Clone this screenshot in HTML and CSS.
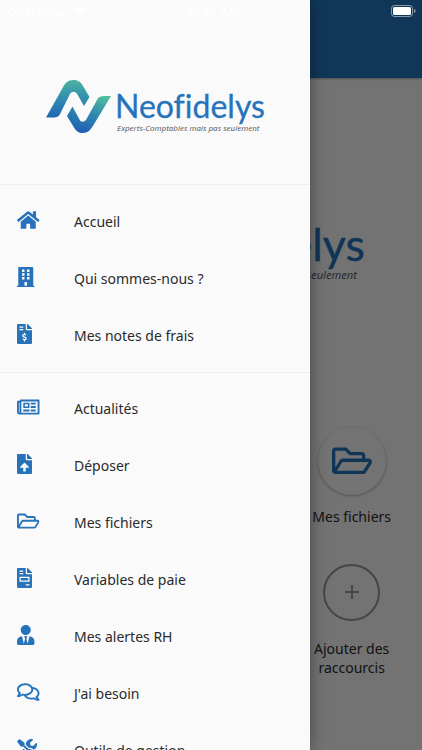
FILE: index.html
```html
<!DOCTYPE html>
<html lang="fr">
<head>
<meta charset="utf-8">
<meta name="viewport" content="width=device-width, initial-scale=1">
<title>Neofidelys</title>
<link rel="stylesheet" href="styles.css">
</head>
<body>
<svg class="defs" aria-hidden="true">
  <defs>
    <linearGradient id="mark-up" x1="0" y1="0" x2="0" y2="1">
      <stop offset="0" stop-color="#4bb3a0"/>
      <stop offset="0.45" stop-color="#3391ad"/>
      <stop offset="1" stop-color="#1f66b4"/>
    </linearGradient>
    <linearGradient id="mark-down" x1="0.8" y1="0" x2="0.4" y2="1">
      <stop offset="0" stop-color="#50bd9d"/>
      <stop offset="0.5" stop-color="#2f88b0"/>
      <stop offset="1" stop-color="#2060b4"/>
    </linearGradient>
    <symbol id="logo" viewBox="0 0 220 54">
      <path fill="url(#mark-up)" d="M1 37.500 17 9C20 3 23 0 28.500 0 33.500 0 36 2.500 38 6L44.500 17 39 26 32.500 14.500C30.500 11 27 11 25 14L15.500 33C14 36.500 12 37.500 8 37.500Z"/>
      <path fill="url(#mark-down)" d="M66 16 48.500 45C45.500 50 43 53 38 53 33.500 53 31 51 29 47.500L22 36 27.500 26.500 34.500 39.500C36 42.500 39.500 42.500 41.500 39L52 20C53.500 17 55.500 16 59 16Z"/>
      <text class="logo-name" x="70" y="38">Neofidelys</text>
      <text class="logo-tag" x="72" y="51">Experts-Comptables mais pas seulement</text>
    </symbol>
    <symbol id="folder" viewBox="0 0 576 512">
      <path fill-rule="evenodd" d="M527.900 224H480v-48c0-26.500-21.500-48-48-48H272l-64-64H48C21.500 64 0 85.500 0 112v288c0 26.500 21.500 48 48 48h400c16.500 0 31.900-8.500 40.700-22.600l79.900-128c20-31.900-3-73.400-40.700-73.400zM48 118c0-3.300 2.700-6 6-6h134.100l64 64H426c3.300 0 6 2.700 6 6v42H152c-16.800 0-32.400 8.800-41.100 23.200L48 351.400zm400 282H72l77.200-128H528z"/>
    </symbol>
  </defs>
</svg>

<main class="page">
  <header class="topbar"></header>
  <svg class="page-logo" viewBox="0 0 220 54" role="img" aria-label="Neofidelys"><use href="#logo"/></svg>
  <div class="shortcuts">
    <a class="tile" href="#fichiers">
      <span class="disc"><svg class="disc-icon" viewBox="0 0 576 512"><use href="#folder"/></svg></span>
      <span>Mes fichiers</span>
    </a>
    <button class="tile" type="button">
      <span class="ring"><svg class="plus" viewBox="0 0 16 16"><path d="M8 1v14M1 8h14"/></svg></span>
      <span>Ajouter des raccourcis</span>
    </button>
  </div>
</main>
<div class="scrim"></div>

<nav class="drawer">
  <div class="drawer-head">
    <svg class="drawer-logo" viewBox="0 0 220 54" role="img" aria-label="Neofidelys"><use href="#logo"/></svg>
  </div>
  <ul class="menu">
    <li><a class="item" href="#accueil">
      <span class="icon"><svg viewBox="0 0 576 512"><path d="M280.370 148.260L96 300.110V464a16 16 0 0 0 16 16l112.060-.290a16 16 0 0 0 15.920-16V368a16 16 0 0 1 16-16h64a16 16 0 0 1 16 16v95.640a16 16 0 0 0 16 16.050L464 480a16 16 0 0 0 16-16V300L295.670 148.260a12.190 12.190 0 0 0-15.300 0zM571.600 251.470L488 182.560V44.050a12 12 0 0 0-12-12h-56a12 12 0 0 0-12 12v72.610L318.470 43a48 48 0 0 0-61 0L4.340 251.470a12 12 0 0 0-1.600 16.900l25.500 31A12 12 0 0 0 45.150 301l235.220-193.740a12.190 12.190 0 0 1 15.300 0L530.900 301a12 12 0 0 0 16.900-1.600l25.500-31a12 12 0 0 0-1.700-16.930z"/></svg></span>
      Accueil</a></li>
    <li><a class="item" href="#qui">
      <span class="icon"><svg viewBox="0 0 448 512"><path fill-rule="evenodd" d="M436 480h-20V24c0-13.300-10.700-24-24-24H56C42.700 0 32 10.700 32 24v456H12c-6.600 0-12 5.400-12 12v20h448v-20c0-6.600-5.400-12-12-12zM128 64h64v64h-64zM256 64h64v64h-64zM128 160h64v64h-64zM256 160h64v64h-64zM128 256h64v64h-64zM256 256h64v64h-64zM192 384h64v96h-64z"/></svg></span>
      Qui sommes-nous ?</a></li>
    <li><a class="item" href="#notes">
      <span class="icon"><svg viewBox="0 0 384 512"><path fill-rule="evenodd" d="M377 105L279.100 7c-4.500-4.500-10.600-7-17-7H256v128h128v-6.100c0-6.300-2.500-12.400-7-16.900zM224 136V0H24C10.700 0 0 10.700 0 24v464c0 13.300 10.700 24 24 24h336c13.300 0 24-10.700 24-24V160H248c-13.200 0-24-10.800-24-24zM64 64h96v32H64zM64 128h96v32H64zM208 415.880V440c0 4.420-3.580 8-8 8h-16c-4.420 0-8-3.580-8-8v-24.290c-11.290-.580-22.270-4.520-31.370-11.350-3.900-2.930-4.100-8.770-.570-12.140l11.750-11.210c2.770-2.640 6.890-2.760 10.130-.730 3.870 2.420 8.260 3.720 12.820 3.720h28.110c6.500 0 11.800-5.920 11.800-13.190 0-5.950-3.610-11.190-8.770-12.730l-45-13.500c-18.590-5.580-31.580-23.420-31.580-43.390 0-24.520 19.050-44.440 42.670-45.070V232c0-4.420 3.580-8 8-8h16c4.420 0 8 3.580 8 8v24.290c11.290.580 22.270 4.510 31.370 11.350 3.900 2.930 4.100 8.770.570 12.140l-11.750 11.210c-2.770 2.640-6.890 2.760-10.130.730-3.870-2.430-8.260-3.720-12.820-3.720h-28.110c-6.500 0-11.800 5.920-11.800 13.190 0 5.950 3.610 11.190 8.770 12.730l45 13.500c18.590 5.580 31.580 23.420 31.580 43.390 0 24.530-19.050 44.440-42.670 45.070z"/></svg></span>
      Mes notes de frais</a></li>
  </ul>
  <ul class="menu">
    <li><a class="item" href="#actualites">
      <span class="icon"><svg viewBox="0 0 576 512"><path fill-rule="evenodd" d="M552 64H112c-20.900 0-38.700 13.400-45.300 32H24c-13.300 0-24 10.700-24 24v272c0 30.900 25.100 56 56 56h496c13.300 0 24-10.700 24-24V88c0-13.300-10.700-24-24-24zM48 392V144h16v248c0 4.400-3.600 8-8 8s-8-3.600-8-8zM528 400H111.400c.400-2.600.600-5.300.600-8V112h416zM172 280h136c6.600 0 12-5.400 12-12V156c0-6.600-5.400-12-12-12H172c-6.600 0-12 5.400-12 12v112c0 6.600 5.400 12 12 12zM200 184h80v56h-80zM160 320h160v48H160zM352 144h128v48H352zM352 232h128v48H352zM352 320h128v48H352z"/></svg></span>
      Actualités</a></li>
    <li><a class="item" href="#deposer">
      <span class="icon"><svg viewBox="0 0 384 512"><path fill-rule="evenodd" d="M377 105L279.100 7c-4.500-4.500-10.600-7-17-7H256v128h128v-6.100c0-6.300-2.500-12.400-7-16.900zM224 136V0H24C10.700 0 0 10.700 0 24v464c0 13.300 10.700 24 24 24h336c13.300 0 24-10.700 24-24V160H248c-13.200 0-24-10.800-24-24zM289.180 352.010H224v80c0 8.840-7.160 16-16 16h-32c-8.840 0-16-7.160-16-16v-80H94.820c-14.280 0-21.410-17.290-11.270-27.360l96.420-95.700c6.650-6.610 17.390-6.610 24.040 0l96.420 95.700c10.150 10.070 3.030 27.360-11.250 27.360z"/></svg></span>
      Déposer</a></li>
    <li><a class="item" href="#fichiers">
      <span class="icon"><svg viewBox="0 0 576 512"><use href="#folder"/></svg></span>
      Mes fichiers</a></li>
    <li><a class="item" href="#paie">
      <span class="icon"><svg viewBox="0 0 384 512"><path fill-rule="evenodd" d="M377 105L279.100 7c-4.500-4.500-10.600-7-17-7H256v128h128v-6.100c0-6.300-2.500-12.400-7-16.900zM224 136V0H24C10.700 0 0 10.700 0 24v464c0 13.300 10.700 24 24 24h336c13.300 0 24-10.700 24-24V160H248c-13.200 0-24-10.800-24-24zM64 64h96v32H64zM64 128h96v32H64zM64 224h256v128H64zM96 256v64h192v-64zM224 416h96v32h-96z"/></svg></span>
      Variables de paie</a></li>
    <li><a class="item" href="#alertes">
      <span class="icon"><svg viewBox="0 0 448 512"><path d="M224 256c70.700 0 128-57.300 128-128S294.700 0 224 0 96 57.300 96 128s57.300 128 128 128zm95.800 32.600L272 480l-32-136 32-56h-96l32 56-32 136-47.800-191.400C56.900 292 0 350.300 0 422.400V464c0 26.500 21.500 48 48 48h352c26.500 0 48-21.500 48-48v-41.600c0-72.100-56.900-130.400-128.200-133.800z"/></svg></span>
      Mes alertes RH</a></li>
    <li><a class="item" href="#besoin">
      <span class="icon"><svg viewBox="0 0 576 512"><path d="M532 386.200c27.500-27.100 44-61.100 44-98.200 0-80-76.500-146.100-176.200-157.900C368.300 72.500 294.300 32 208 32 93.100 32 0 103.600 0 192c0 37 16.500 71 44 98.200-15.300 30.700-37.300 54.500-37.700 54.900-6.300 6.700-8.100 16.500-4.400 25 3.600 8.500 12 14 21.200 14 53.500 0 96.700-20.200 125.200-38.800 9.200 2.100 18.700 3.700 28.400 4.900C208.100 407.600 281.800 448 368 448c20.800 0 40.800-2.400 59.800-6.800C456.300 459.700 499.400 480 553 480c9.200 0 17.500-5.500 21.200-14 3.600-8.500 1.900-18.300-4.400-25-.400-.300-22.500-24.100-37.800-54.800zm-392.800-92.300L122.100 305c-14.100 9.100-28.500 16.300-43.100 21.400 2.700-4.700 5.400-9.700 8-14.800l15.500-31.100L77.700 256C64.200 242.600 48 220.700 48 192c0-60.700 73.300-112 160-112s160 51.300 160 112-73.300 112-160 112c-16.500 0-33-1.900-49-5.600l-19.800-4.500zM498.300 352l-24.700 24.400 15.500 31.100c2.600 5.100 5.300 10.100 8 14.800-14.600-5.100-29-12.300-43.100-21.400l-17.100-11.100-19.900 4.600c-16 3.700-32.500 5.600-49 5.600-54 0-102.200-20.100-131.300-49.700C338 339.500 416 272.900 416 192c0-3.400-.400-6.700-.700-10C479.700 196.500 528 238.800 528 288c0 28.700-16.200 50.600-29.700 64z"/></svg></span>
      J'ai besoin</a></li>
    <li><a class="item" href="#outils">
      <span class="icon"><svg viewBox="0 0 512 512"><path d="M501.100 395.700L384 278.600c-23.100-23.100-57.600-27.600-85.400-13.900L192 158.100V96L64 0 0 64l96 128h62.100l106.600 106.600c-13.600 27.800-9.200 62.300 13.900 85.400l117.100 117.100c14.600 14.600 38.200 14.600 52.700 0l52.700-52.700c14.500-14.600 14.500-38.200 0-52.700zM331.700 225c28.300 0 54.900 11 74.900 31l19.400 19.400c15.800-6.900 30.800-16.500 43.800-29.500 37.100-37.100 49.700-89.300 37.900-136.700-2.200-9-13.500-12.100-20.100-5.500l-74.400 74.400-67.900-11.300L334 98.900l74.400-74.400c6.600-6.600 3.400-17.900-5.700-20.200-47.400-11.700-99.600.900-136.600 37.900-28.500 28.500-41.900 66.100-41.200 103.600l82.100 82.100c8.100-1.900 16.500-2.900 24.700-2.900zm-103.900 82l-56.700-56.700L18.700 402.800c-25 25-25 65.500 0 90.500s65.500 25 90.500 0l123.600-123.600c-7.600-19.900-9.900-41.600-5-62.700z"/></svg></span>
      Outils de gestion</a></li>
  </ul>
</nav>

<div class="status">
  <span class="carrier">Opérateur
    <svg class="wifi" viewBox="0 0 15 11"><path d="M1 4.200a9.500 9.500 0 0 1 13 0M3.300 6.600a6.200 6.200 0 0 1 8.400 0"/><path class="wifi-dot" d="M7.500 11 5 8.500a3.600 3.600 0 0 1 5 0z"/></svg>
  </span>
  <span>10:50 AM</span>
  <svg class="battery" viewBox="0 0 25 12"><rect class="cell" x="0.500" y="0.500" width="21" height="11" rx="3"/><rect x="2" y="2" width="18" height="8" rx="1.500"/><path class="cap" d="M23 4c2 .5 2 3.500 0 4z"/></svg>
</div>
</body>
</html>
```
FILE: styles.css
```css
* {
  box-sizing: border-box;
}

body {
  margin: 0;
  height: 100vh;
  overflow: hidden;
  position: relative;
  background: #fafafa;
  color: #2b2b2b;
  font-family: "Noto Sans", "Open Sans", sans-serif;
  font-size: 14px;
  line-height: 19px;
}

.defs {
  position: absolute;
  width: 0;
  height: 0;
}

.logo-name {
  font-family: Lato, sans-serif;
  font-size: 32px;
  font-variant-ligatures: none;
  fill: #2673bb;
  stroke: #2673bb;
  stroke-width: 0.3px;
}

.logo-tag {
  font-family: "Open Sans", sans-serif;
  font-size: 8px;
  font-style: italic;
  fill: #555;
}

.page {
  display: flex;
  flex-direction: column;
  align-items: center;
}

.topbar {
  align-self: stretch;
  height: 78px;
  background: #2679c0;
  box-shadow: 0 1px 2px rgba(0, 0, 0, 0.3);
}

.page-logo {
  width: 73%;
  margin-top: 130px;
}

.shortcuts {
  align-self: stretch;
  display: grid;
  grid-template-columns: repeat(3, 1fr);
  row-gap: 38px;
  margin-top: 143px;
}

.tile {
  grid-column: 3;
  display: flex;
  flex-direction: column;
  align-items: center;
  gap: 12px;
  padding: 0 20px;
  border: 0;
  background: none;
  color: inherit;
  font: inherit;
  text-align: center;
  text-decoration: none;
  white-space: nowrap;
}

button.tile {
  gap: 18px;
  white-space: normal;
}

.disc {
  display: grid;
  place-items: center;
  width: 68px;
  height: 68px;
  border-radius: 50%;
  background: #fafafa;
  box-shadow: 0 1px 3px rgba(0, 0, 0, 0.3);
}

.disc-icon {
  width: 40px;
  fill: #2673bb;
}

.ring {
  display: grid;
  place-items: center;
  width: 57px;
  height: 57px;
  border: 2px solid #999;
  border-radius: 50%;
}

.plus {
  width: 16px;
  stroke: #999;
  stroke-width: 2;
}

.scrim {
  position: absolute;
  inset: 0;
  background: rgba(0, 0, 0, 0.54);
}

.drawer {
  position: absolute;
  top: 0;
  bottom: 0;
  left: 0;
  width: 310px;
  max-width: 90%;
  overflow: hidden;
  background: #fafafa;
  box-shadow: 0 0 16px rgba(0, 0, 0, 0.4);
}

.drawer-head {
  display: flex;
  justify-content: center;
  padding: 80px 0 50px;
}

.drawer-logo {
  width: 220px;
  height: 54px;
}

.menu {
  margin: 0;
  padding: 8px 0;
  border-top: 1px solid #eee;
  list-style: none;
}

.menu + .menu {
  padding-top: 7px;
}

.item {
  display: flex;
  align-items: center;
  height: 57px;
  padding: 0 17px;
  color: inherit;
  text-decoration: none;
}

.icon {
  width: 57px;
  height: 24px;
}

.icon svg {
  display: block;
  height: 20px;
  fill: #2673bb;
}

.status {
  position: absolute;
  top: 0;
  left: 0;
  right: 0;
  display: grid;
  grid-template-columns: 1fr auto 1fr;
  align-items: center;
  height: 22px;
  padding: 0 6px 0 8px;
  color: #fff;
  font-family: Inter, sans-serif;
  font-size: 12px;
  font-weight: 600;
}

.carrier {
  display: flex;
  align-items: center;
  gap: 6px;
}

.wifi {
  width: 15px;
  fill: none;
  stroke: #fff;
  stroke-width: 2;
}

.wifi-dot {
  fill: #fff;
  stroke: none;
}

.battery {
  justify-self: end;
  width: 25px;
  fill: #fff;
}

.cell {
  fill: none;
  stroke: #fff;
  stroke-opacity: 0.5;
}

.cap {
  fill-opacity: 0.5;
}
```
